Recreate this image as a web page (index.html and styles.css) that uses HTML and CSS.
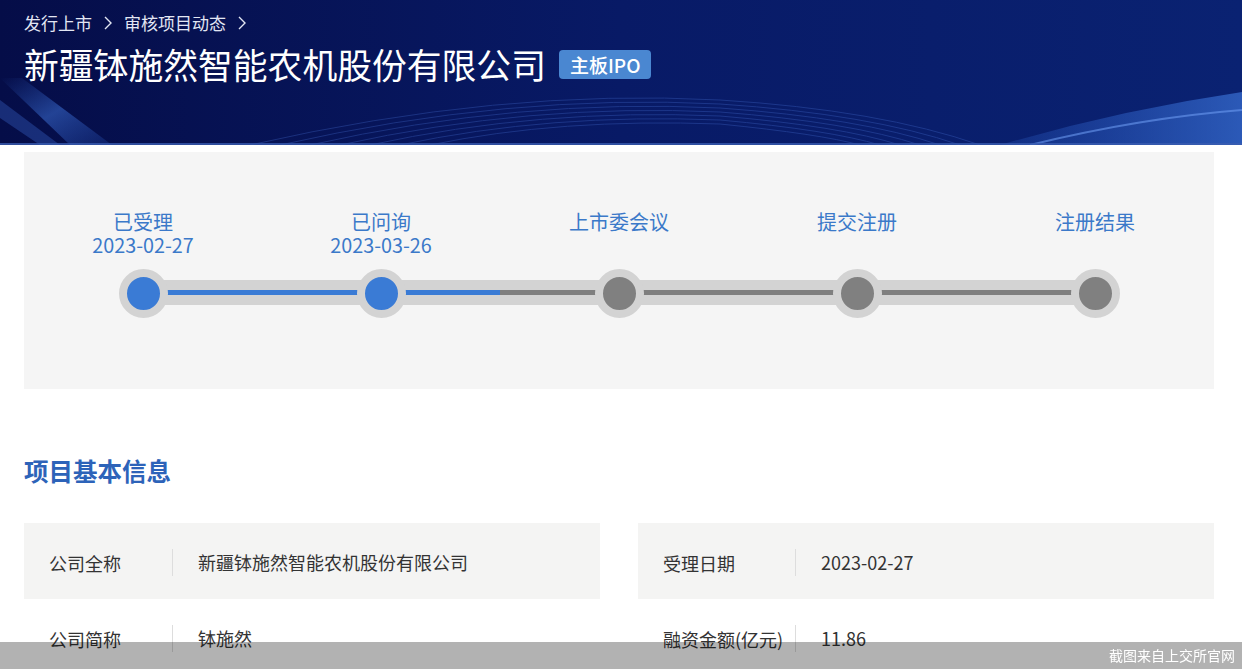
FILE: index.html
```html
<!DOCTYPE html>
<html lang="zh-CN">
<head>
<meta charset="utf-8">
<title>新疆钵施然智能农机股份有限公司</title>
<link rel="stylesheet" href="styles.css">
</head>
<body>
<header class="hero">
  <svg class="hero-bg" viewBox="0 0 1242 145" preserveAspectRatio="none" aria-hidden="true">
    <defs>
      <linearGradient id="bg" x1="0" y1="0" x2="1" y2="0">
        <stop offset="0" stop-color="#050d48"/>
        <stop offset="0.5" stop-color="#081a66"/>
        <stop offset="1" stop-color="#0a2272"/>
      </linearGradient>
      <linearGradient id="streak" x1="0" y1="0" x2="1" y2="1">
        <stop offset="0" stop-color="#2f5fc4" stop-opacity="0"/>
        <stop offset="0.5" stop-color="#3a6cd0" stop-opacity="0.8"/>
        <stop offset="1" stop-color="#2a58c0" stop-opacity="0.3"/>
      </linearGradient>
      <linearGradient id="right" x1="0" y1="0" x2="1" y2="0">
        <stop offset="0" stop-color="#2f64d0" stop-opacity="0.3"/>
        <stop offset="1" stop-color="#3f7ae0" stop-opacity="0.9"/>
      </linearGradient>
    </defs>
    <rect width="1242" height="145" fill="url(#bg)"/>
    <path d="M0 78 L22 78 L112 145 L70 145 Z" fill="url(#streak)" opacity="0.7"/>
    <path d="M0 100 L60 145 L40 145 L0 118 Z" fill="#3b6bd0" opacity="0.35"/>
    <g fill="none" stroke="#4a74d8" stroke-width="1" opacity="0.3">
      <path d="M250 145 Q500 88 720 100 Q880 110 980 145"/>
      <path d="M280 145 Q510 93 720 104 Q870 114 960 145"/>
      <path d="M310 145 Q520 98 720 108 Q860 118 940 145"/>
      <path d="M340 145 Q530 103 720 112 Q850 122 920 145"/>
      <path d="M370 145 Q540 108 720 116 Q840 126 900 145"/>
      <path d="M400 145 Q550 113 720 120 Q830 130 880 145"/>
      <path d="M430 145 Q560 118 720 124 Q820 134 860 145"/>
    </g>
    <path d="M1000 145 Q1120 110 1242 92 L1242 145 Z" fill="url(#right)" opacity="0.7"/>
    <path d="M1030 145 Q1140 118 1242 110" fill="none" stroke="#6a9af0" stroke-width="2" opacity="0.6"/>
    <rect y="143" width="1242" height="2" fill="#3a5cb0" opacity="0.8"/>
  </svg>
  <div class="hero-inner">
    <nav class="crumbs">
      <span>发行上市</span>
      <svg class="chev" viewBox="0 0 8 14" aria-hidden="true"><path d="M1 1 L7 7 L1 13" fill="none" stroke="#e2e6f3" stroke-width="1.4"/></svg>
      <span>审核项目动态</span>
      <svg class="chev" viewBox="0 0 8 14" aria-hidden="true"><path d="M1 1 L7 7 L1 13" fill="none" stroke="#e2e6f3" stroke-width="1.4"/></svg>
    </nav>
    <div class="title-row">
      <h1 class="title">新疆钵施然智能农机股份有限公司</h1>
      <span class="badge">主板IPO</span>
    </div>
  </div>
</header>

<main class="main">
  <section class="progress">
    <div class="steps">
      <div class="step"><div class="step-name">已受理</div><div class="step-date">2023-02-27</div></div>
      <div class="step"><div class="step-name">已问询</div><div class="step-date">2023-03-26</div></div>
      <div class="step"><div class="step-name">上市委会议</div></div>
      <div class="step"><div class="step-name">提交注册</div></div>
      <div class="step"><div class="step-name">注册结果</div></div>
    </div>
    <div class="track">
      <div class="dots">
        <span class="dot done"></span>
        <span class="dot done"></span>
        <span class="dot"></span>
        <span class="dot"></span>
        <span class="dot"></span>
      </div>
    </div>
  </section>

  <h2 class="section-title">项目基本信息</h2>

  <div class="info">
    <div class="row shaded"><span class="label">公司全称</span><span class="value">新疆钵施然智能农机股份有限公司</span></div>
    <div class="row shaded wide"><span class="label">受理日期</span><span class="value">2023-02-27</span></div>
    <div class="row"><span class="label">公司简称</span><span class="value">钵施然</span></div>
    <div class="row wide"><span class="label">融资金额(亿元)</span><span class="value">11.86</span></div>
  </div>
</main>

<div class="watermark">截图来自上交所官网</div>
</body>
</html>
```

FILE: styles.css
```css
* { box-sizing: border-box; }
html, body {
  margin: 0;
  padding: 0;
  background: #ffffff;
  font-family: "Noto Sans CJK SC", "Noto Sans", sans-serif;
  color: #333333;
  overflow: hidden;
}
body { width: 1242px; height: 669px; }

.hero {
  position: relative;
  height: 145px;
  overflow: hidden;
}
.hero-bg {
  position: absolute;
  left: 0;
  top: 0;
  width: 100%;
  height: 100%;
  display: block;
}
.hero-inner {
  position: relative;
  padding: 11px 24px 0;
}
.crumbs {
  display: flex;
  align-items: center;
  font-size: 17px;
  line-height: 24px;
  color: #e2e6f3;
}
.chev {
  width: 8px;
  height: 14px;
  margin: 0 12px 0 12px;
  flex: none;
}
.title-row {
  display: flex;
  align-items: center;
  margin-top: 4px;
}
.title {
  margin: 0;
  font-size: 34.8px;
  line-height: 50px;
  font-weight: 400;
  color: #ffffff;
}
.badge {
  margin-left: 13px;
  height: 29px;
  padding: 0 11px;
  border-radius: 4px;
  background: #4a87d1;
  color: #ffffff;
  font-size: 19px;
  line-height: 29px;
  font-weight: 500;
}

.main {
  width: 1190px;
  margin-left: 24px;
  padding-top: 7px;
}

.progress {
  background: #f5f5f5;
  height: 237px;
  padding-top: 58px;
}
.steps {
  display: grid;
  grid-template-columns: repeat(5, 1fr);
  text-align: center;
  color: #3b79c9;
  font-size: 20px;
  line-height: 23px;
  height: 70px;
}
.step-date { font-size: 19.8px; }

.track {
  margin: 0 119px;
  height: 25px;
  background:
    linear-gradient(to right, #3a7bd5 0, #3a7bd5 357px, #7f7f7f 357px, #7f7f7f 100%) center / 100% 5px no-repeat,
    #d3d3d3;
}
.dots {
  display: flex;
  justify-content: space-between;
  align-items: center;
  height: 100%;
  margin: 0 -24.5px;
}
.dot {
  width: 49px;
  height: 49px;
  border-radius: 50%;
  border: 8.5px solid #d3d3d3;
  background: #808080;
  flex: none;
  margin-top: 1px;
}
.dot.done { background: #3a7bd5; }

.section-title {
  margin: 66px 0 0;
  font-size: 24.5px;
  line-height: 32px;
  font-weight: 700;
  color: #2d63b9;
}

.info {
  margin-top: 36px;
  display: grid;
  grid-template-columns: 576px 576px;
  column-gap: 38px;
}
.row {
  height: 76px;
  display: flex;
  align-items: center;
  padding: 3px 0 0 25px;
  font-size: 18px;
  color: #333333;
}
.row.shaded { background: #f4f4f3; }
.label {
  width: 123px;
  flex: none;
  white-space: nowrap;
}
.row.wide .label { width: 132px; }
.value {
  border-left: 1px solid #dddddd;
  padding-left: 25px;
  line-height: 27px;
}

.watermark {
  position: fixed;
  left: 0;
  right: 0;
  bottom: 0;
  height: 27px;
  background: rgba(0, 0, 0, 0.3);
  color: #ffffff;
  font-size: 14px;
  line-height: 27px;
  text-align: right;
  padding-right: 7px;
}
```
